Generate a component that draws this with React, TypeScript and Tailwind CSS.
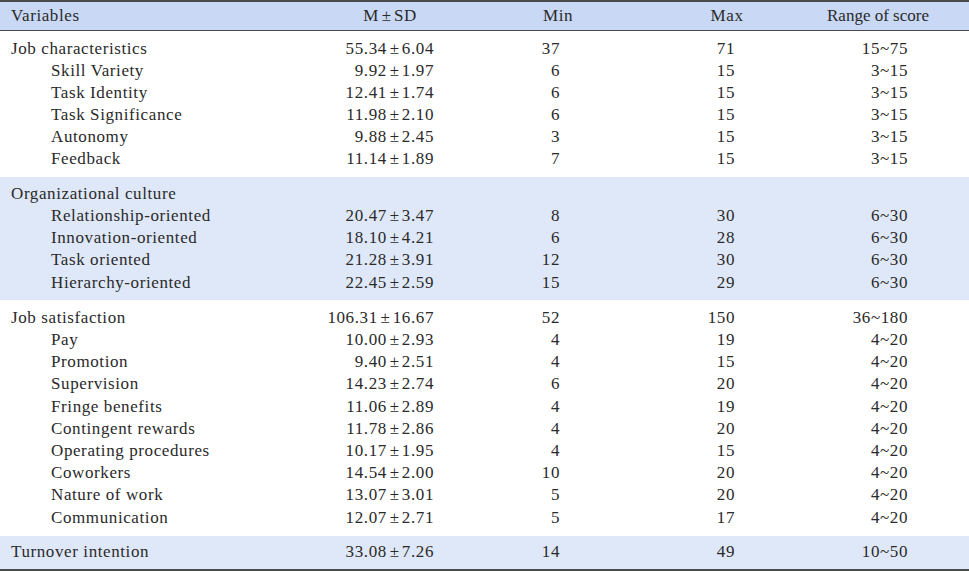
import React from "react";

type Row = { label: string; sub?: boolean; msd?: string; min?: string; max?: string; range?: string };

const groups: { bg: string; pad: string; rows: Row[] }[] = [
  {
    bg: "bg-white",
    pad: "pt-[6.5px] pb-[6.3px]",
    rows: [
      { label: "Job characteristics", msd: "55.34±6.04", min: "37", max: "71", range: "15~75" },
      { label: "Skill Variety", sub: true, msd: "9.92±1.97", min: "6", max: "15", range: "3~15" },
      { label: "Task Identity", sub: true, msd: "12.41±1.74", min: "6", max: "15", range: "3~15" },
      { label: "Task Significance", sub: true, msd: "11.98±2.10", min: "6", max: "15", range: "3~15" },
      { label: "Autonomy", sub: true, msd: "9.88±2.45", min: "3", max: "15", range: "3~15" },
      { label: "Feedback", sub: true, msd: "11.14±1.89", min: "7", max: "15", range: "3~15" },
    ],
  },
  {
    bg: "bg-[#dfe8f8]",
    pad: "py-[6px]",
    rows: [
      { label: "Organizational culture" },
      { label: "Relationship-oriented", sub: true, msd: "20.47±3.47", min: "8", max: "30", range: "6~30" },
      { label: "Innovation-oriented", sub: true, msd: "18.10±4.21", min: "6", max: "28", range: "6~30" },
      { label: "Task oriented", sub: true, msd: "21.28±3.91", min: "12", max: "30", range: "6~30" },
      { label: "Hierarchy-oriented", sub: true, msd: "22.45±2.59", min: "15", max: "29", range: "6~30" },
    ],
  },
  {
    bg: "bg-white",
    pad: "py-[7px]",
    rows: [
      { label: "Job satisfaction", msd: "106.31±16.67", min: "52", max: "150", range: "36~180" },
      { label: "Pay", sub: true, msd: "10.00±2.93", min: "4", max: "19", range: "4~20" },
      { label: "Promotion", sub: true, msd: "9.40±2.51", min: "4", max: "15", range: "4~20" },
      { label: "Supervision", sub: true, msd: "14.23±2.74", min: "6", max: "20", range: "4~20" },
      { label: "Fringe benefits", sub: true, msd: "11.06±2.89", min: "4", max: "19", range: "4~20" },
      { label: "Contingent rewards", sub: true, msd: "11.78±2.86", min: "4", max: "20", range: "4~20" },
      { label: "Operating procedures", sub: true, msd: "10.17±1.95", min: "4", max: "15", range: "4~20" },
      { label: "Coworkers", sub: true, msd: "14.54±2.00", min: "10", max: "20", range: "4~20" },
      { label: "Nature of work", sub: true, msd: "13.07±3.01", min: "5", max: "20", range: "4~20" },
      { label: "Communication", sub: true, msd: "12.07±2.71", min: "5", max: "17", range: "4~20" },
    ],
  },
  {
    bg: "bg-[#dfe8f8]",
    pad: "pt-[5.6px] pb-[5.2px]",
    rows: [{ label: "Turnover intention", msd: "33.08±7.26", min: "14", max: "49", range: "10~50" }],
  },
];

const grid = "grid grid-cols-[310px_160px_176px_162px_140px_21px]";

function PM({ text }: { text: string }) {
  const [a, b] = text.split("±");
  return (
    <>
      {a}
      <span className="inline-block w-[15px] text-center tracking-normal">±</span>
      {b}
    </>
  );
}

export default function App() {
  return (
    <div
      className="w-[969px] h-[571px] bg-white text-[#2a2a2a] text-[17px] tracking-[0.6px]"
      style={{ fontFamily: '"Liberation Serif", serif' }}
    >
      <div className={`${grid} h-[31px] items-center bg-[#c9d8f4] border-t-2 border-b border-[#4a4a4a]`}>
        <div className="pl-[11px]">Variables</div>
        <div className="text-center">
          M<span className="inline-block w-[15px] text-center tracking-normal">±</span>SD
        </div>
        <div className="text-center">Min</div>
        <div className="text-center">Max</div>
        <div className="text-center tracking-normal">Range of score</div>
        <div />
      </div>
      {groups.map((g, gi) => (
        <div key={gi} className={`${g.bg} ${g.pad}`}>
          {g.rows.map((r, ri) => (
            <div key={ri} className={`${grid} h-[22.2px] leading-[22.2px]`}>
              <div className={r.sub ? "pl-[51px]" : "pl-[11px]"}>{r.label}</div>
              <div className="text-right pr-[36px]">{r.msd ? <PM text={r.msd} /> : ""}</div>
              <div className="text-right pr-[86px]">{r.min ?? ""}</div>
              <div className="text-right pr-[73px]">{r.max ?? ""}</div>
              <div className="text-right pr-[40px]">{r.range ?? ""}</div>
              <div />
            </div>
          ))}
        </div>
      ))}
      <div className="h-[2px] bg-[#4a4a4a]" />
    </div>
  );
}
